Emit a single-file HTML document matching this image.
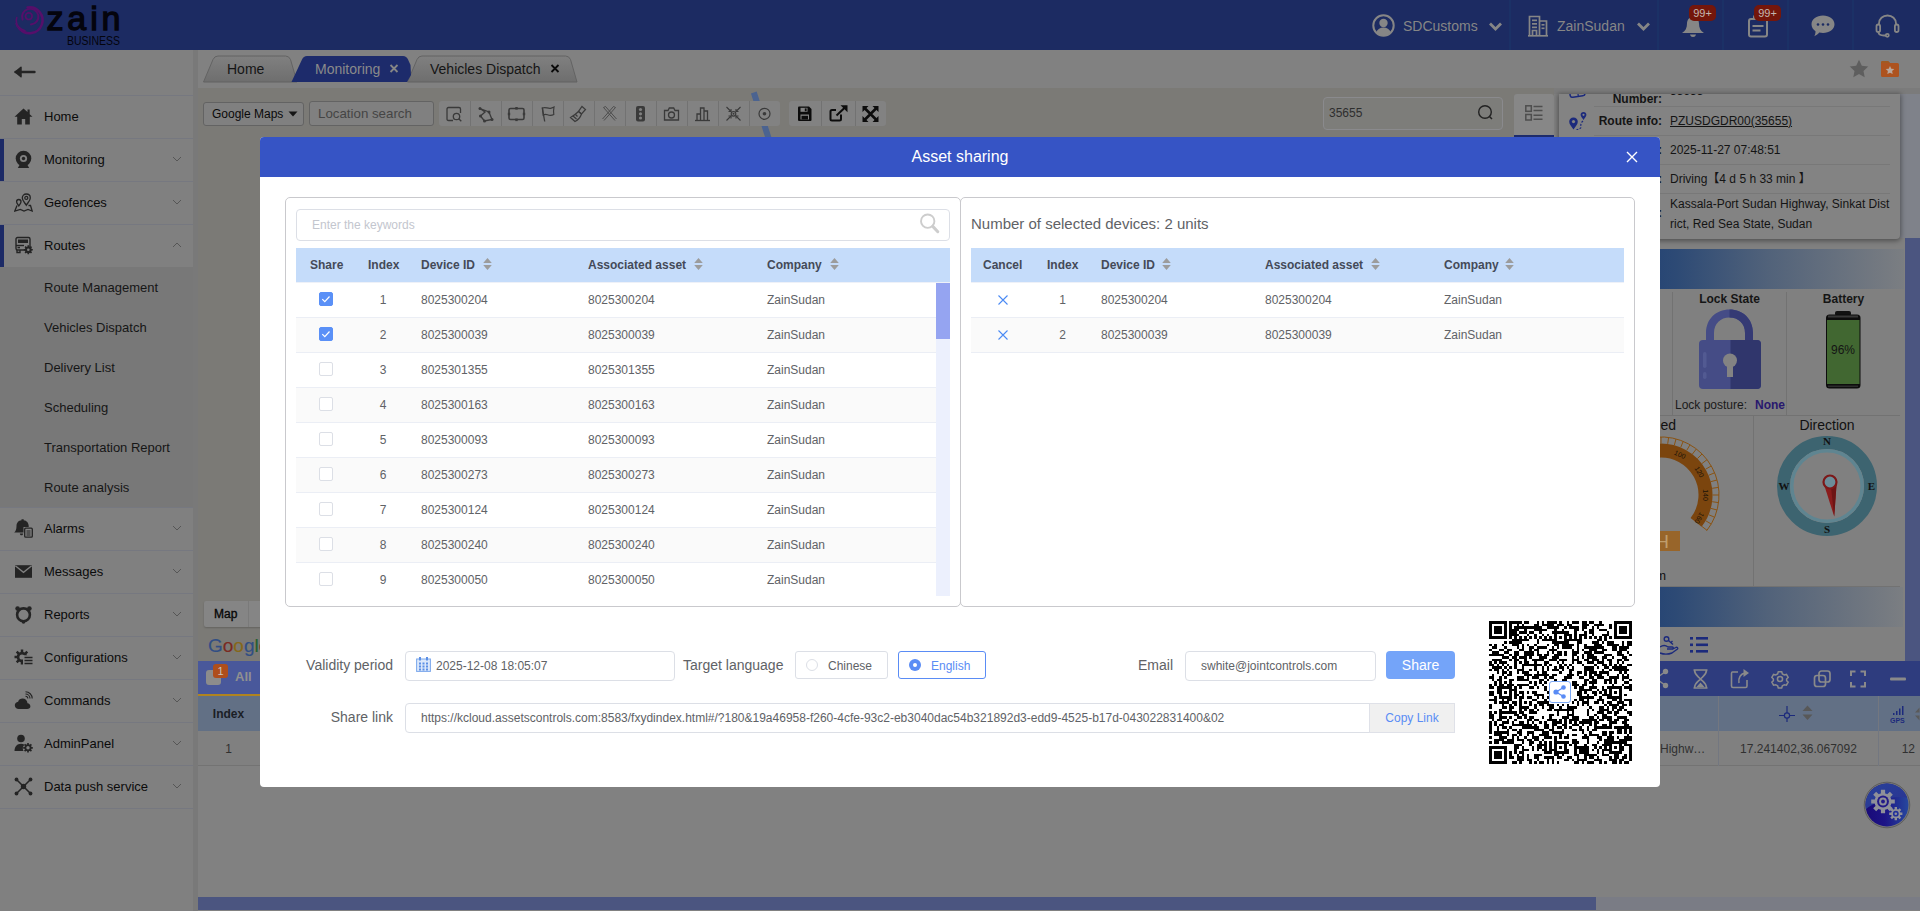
<!DOCTYPE html>
<html lang="en">
<head>
<meta charset="utf-8">
<title>Asset sharing</title>
<style>
*{box-sizing:border-box;margin:0;padding:0}
html,body{width:1920px;height:911px;overflow:hidden;background:#808080;font-family:"Liberation Sans",Arial,sans-serif;font-size:12px;color:#111}
.abs{position:absolute}
#app{position:absolute;left:0;top:0;width:1920px;height:911px;overflow:hidden;background:#808080}
/* ---------- header ---------- */
#hdr{position:absolute;left:0;top:0;width:1920px;height:50px;background:#1c2b62}
#hdr .sep{position:absolute;top:0;width:2px;height:50px;background:#1b3166}
#hdr .t{position:absolute;top:17px;font-size:14px;line-height:18px;color:#868686;white-space:nowrap}
.badge{position:absolute;top:5px;height:16px;width:27px;border-radius:5px;background:#74160b;color:#c4b6b0;font-size:11px;line-height:16px;text-align:center}
/* ---------- sidebar ---------- */
#side{position:absolute;left:0;top:50px;width:193px;height:861px;background:#808080}
#gut{position:absolute;left:193px;top:50px;width:5px;height:861px;background:#797979}
.mi{position:absolute;left:0;width:193px;height:43px;border-top:1px solid #767880}
.mi .tx{position:absolute;left:44px;top:13px;font-size:13px;line-height:16px;color:#0b0b0b;white-space:nowrap}
.mi svg.ic{position:absolute;left:14px;top:11px;width:19px;height:19px}
.mi svg.ch{position:absolute;left:172px;top:16px;width:10px;height:8px}
.mi.act:before{content:"";position:absolute;left:0;top:0;width:4px;height:42px;background:#1c2a66}
#sub{position:absolute;left:0;top:267px;width:193px;height:240px;background:#787878}
#sub div{position:absolute;left:44px;font-size:13px;line-height:16px;color:#161616;white-space:nowrap}
/* ---------- tabs ---------- */
#tabs{position:absolute;left:198px;top:50px;width:1722px;height:38px;background:#818181}
#tabs .lbl{position:absolute;top:11px;font-size:14px;line-height:16px;white-space:nowrap}
/* ---------- map ---------- */
#map{position:absolute;left:198px;top:88px;width:1722px;height:573px;background:#7b7a76}
.tb{position:absolute;border:1px solid #636363;border-radius:3px;background:#808080}
/* ---------- modal ---------- */
#dlg{position:absolute;left:260px;top:137px;width:1400px;height:650px;background:#fff;border-radius:4px;overflow:hidden}
#dlg .hd{position:absolute;left:0;top:0;width:1400px;height:40px;background:#3654c5;color:#fff;font-size:16px;line-height:40px;text-align:center}
.panel{position:absolute;top:60px;width:675px;height:410px;border:1px solid #c9c9cd;border-radius:5px}
.th{position:absolute;height:35px;background:#c5dcfa;border-bottom:1px solid #eef1f8}
.th span,.tr span{position:absolute;white-space:nowrap}
.th span{top:10px;font-weight:bold;font-size:12px;line-height:14px;color:#444a58}
.tr{position:absolute;height:35px;border-bottom:1px solid #ebeef5;background:#fff;color:#606266;font-size:12px}
.tr.g{background:#fafafa}
.tr span{top:10px;line-height:14px}
.so{position:absolute;width:9px;height:14px}
.cb{position:absolute;top:9px;width:14px;height:14px;border:1px solid #dcdfe6;border-radius:2px;background:#fff}
.cb.on{background:#5a90f7;border-color:#5a90f7}
.inp{position:absolute;border:1px solid #dcdfe6;border-radius:4px;background:#fff;color:#606266;font-size:12px;white-space:nowrap;overflow:hidden}
.flb{position:absolute;font-size:14px;line-height:16px;color:#606266;white-space:nowrap;text-align:right}
</style>
</head>
<body>
<div id="app">

<!-- ================= HEADER ================= -->
<div id="hdr">
  <svg class="abs" style="left:0;top:0" width="160" height="50" viewBox="0 0 160 50">
    <g fill="none" stroke="#560f6a" stroke-linecap="round">
      <circle cx="28.800" cy="16.200" r="3.300" stroke-width="1.700"/>
      <path d="M22.600 19.500A8.200 7.800 0 1 1 31 24.400" stroke-width="2"/>
      <path d="M27.500 7.400A13 13 0 1 1 19.500 28.500" stroke-width="2.500"/>
      <path d="M16.800 17.500c-1.800 6 2 11.800 8.200 13.300" stroke-width="1.500"/>
      <path d="M15.800 23.500c1 4.700 5.200 8.300 10.800 8.900" stroke-width="1.200"/>
    </g>
    <text x="46.500" y="30" font-family="Liberation Sans,Arial,sans-serif" font-size="34" fill="#04040d" stroke="#04040d" stroke-width="1.300" textLength="74" lengthAdjust="spacing">zain</text>
    <text x="67" y="44.500" font-family="Liberation Sans,Arial,sans-serif" font-size="12.500" fill="#04040d" textLength="53" lengthAdjust="spacingAndGlyphs">BUSINESS</text>
  </svg>
  <!-- user -->
  <svg class="abs" style="left:1372px;top:14px" width="23" height="23" viewBox="0 0 23 23"><circle cx="11.500" cy="11.500" r="10.200" fill="none" stroke="#868686" stroke-width="2"/><circle cx="11.500" cy="9" r="4.200" fill="#868686"/><path d="M4.200 18.300c1.300-3.300 4-4.800 7.300-4.800s6 1.500 7.300 4.800c-2 2.100-4.500 3.200-7.300 3.200s-5.300-1.100-7.300-3.200z" fill="#868686"/></svg>
  <div class="t" style="left:1403px">SDCustoms</div>
  <svg class="abs" style="left:1488px;top:21px" width="15" height="11" viewBox="0 0 15 11"><path d="M2 2.500l5.500 5.500 5.500-5.500" fill="none" stroke="#868686" stroke-width="2.800"/></svg>
  <div class="sep" style="left:1509px"></div>
  <!-- company -->
  <svg class="abs" style="left:1528px;top:15px" width="20" height="22" viewBox="0 0 20 22"><g fill="none" stroke="#868686" stroke-width="1.700"><path d="M1.500 20.500v-19h10v19"/><path d="M11.500 6h7v14.500"/><path d="M0 20.800h20"/><path d="M4.500 20.500v-5h4v5"/></g><g fill="#868686"><rect x="4" y="4.500" width="5" height="1.700"/><rect x="4" y="8" width="5" height="1.700"/><rect x="4" y="11.500" width="5" height="1.700"/><rect x="13.500" y="9" width="3" height="1.600"/><rect x="13.500" y="12.500" width="3" height="1.600"/></g></svg>
  <div class="t" style="left:1557px">ZainSudan</div>
  <svg class="abs" style="left:1636px;top:21px" width="15" height="11" viewBox="0 0 15 11"><path d="M2 2.500l5.500 5.500 5.500-5.500" fill="none" stroke="#868686" stroke-width="2.800"/></svg>
  <div class="sep" style="left:1657px"></div>
  <!-- bell -->
  <svg class="abs" style="left:1681px;top:16px" width="24" height="22" viewBox="0 0 24 22"><path d="M12 1c-3.600 0-6 2.700-6 6.500 0 4.500-1.500 7.500-5 9.500h22c-3.500-2-5-5-5-9.500 0-3.800-2.400-6.500-6-6.500z" fill="#868686"/><path d="M9 18.500h6c-.4 1.700-1.500 2.500-3 2.500s-2.600-.8-3-2.500z" fill="#868686"/></svg>
  <div class="badge" style="left:1689px">99+</div>
  <div class="sep" style="left:1722px"></div>
  <!-- clipboard -->
  <svg class="abs" style="left:1747px;top:14px" width="22" height="24" viewBox="0 0 22 24"><rect x="2" y="5" width="18" height="17.500" rx="2" fill="none" stroke="#868686" stroke-width="2"/><rect x="6" y="1" width="8" height="5" rx="1.500" fill="#868686"/><rect x="5.500" y="11" width="11" height="2" fill="#868686"/><rect x="5.500" y="15.500" width="8" height="2" fill="#868686"/></svg>
  <div class="badge" style="left:1754px">99+</div>
  <div class="sep" style="left:1787px"></div>
  <!-- chat -->
  <svg class="abs" style="left:1811px;top:15px" width="24" height="23" viewBox="0 0 24 23"><path d="M12 .5c6.400 0 11.500 3.900 11.500 8.800s-5.100 8.800-11.500 8.800c-1.300 0-2.500-.2-3.700-.5-1.500 1.700-3.200 2.900-5.100 3.700.9-1.500 1.300-3.200 1.300-5.100C2 14.600.500 12.100.500 9.300.500 4.400 5.600.5 12 .5z" fill="#868686"/><g fill="#1c2b62"><circle cx="7" cy="9.500" r="1.300"/><circle cx="12" cy="9.500" r="1.300"/><circle cx="17" cy="9.500" r="1.300"/></g></svg>
  <div class="sep" style="left:1852px"></div>
  <!-- headset -->
  <svg class="abs" style="left:1875px;top:14px" width="25" height="24" viewBox="0 0 25 24"><g fill="none" stroke="#868686" stroke-width="1.800"><path d="M4 11v-1.500c0-4.600 3.700-8 8.500-8s8.500 3.400 8.500 8v1.500"/><rect x="1.500" y="10.500" width="3.600" height="7.500" rx="1.800"/><rect x="19.900" y="10.500" width="3.600" height="7.500" rx="1.800"/><path d="M3.500 18c0 2.500 2 3.500 5.500 3.500h2"/><circle cx="12.300" cy="21.300" r="1.500"/></g></svg>
</div>

<!-- ================= SIDEBAR ================= -->
<div id="side"></div>
<div id="gut"></div>
<svg class="abs" style="left:14px;top:65px" width="22" height="14" viewBox="0 0 22 14"><path d="M1.500 7h19" stroke="#242424" stroke-width="2.400" stroke-linecap="round"/><path d="M7 2.300L1.200 7 7 11.700z" fill="#242424" stroke="#242424" stroke-width="1.500" stroke-linejoin="round"/></svg>
<div class="mi" style="top:95px"><svg class="ic" viewBox="0 0 19 19"><path d="M9.500 1.500L.5 9.800h2.700v7.700h4.600v-5.500h3.400v5.500h4.600V9.800h2.700L15.700 7.200V2.500h-2.200v2.600z" fill="#242424"/></svg><div class="tx">Home</div></div>
<div class="mi act" style="top:138px"><svg class="ic" viewBox="0 0 19 19"><circle cx="9.500" cy="8.500" r="7.800" fill="#242424"/><circle cx="9.500" cy="8.500" r="3.600" fill="#808080"/><circle cx="9.500" cy="8.500" r="1.700" fill="#242424"/><path d="M5.500 15l-1.700 3h11.400l-1.700-3z" fill="#242424"/></svg><div class="tx">Monitoring</div><svg class="ch" viewBox="0 0 10 8"><path d="M1 2l4 4 4-4" fill="none" stroke="#565656" stroke-width="1"/></svg></div>
<div class="mi" style="top:181px"><svg class="ic" viewBox="0 0 19 19"><g fill="none" stroke="#242424" stroke-width="1.300"><path d="M12.300 1c2.300 0 4 1.700 4 3.900 0 2.600-2.300 4.600-4 7.300-1.700-2.700-4-4.700-4-7.300 0-2.200 1.700-3.900 4-3.900z"/><circle cx="12.300" cy="4.900" r="1.500"/><path d="M4.800 6.500c1.300 0 2.200 1 2.200 2.200 0 1.500-1.300 2.600-2.200 4.100-.9-1.500-2.200-2.600-2.200-4.100 0-1.200.9-2.200 2.200-2.200z"/><path d="M3 12.500L.8 18l5.500-1.600 3.700 1.600 4-1.600 4.200 1.600-1.700-5.500h-2"/></g></svg><div class="tx">Geofences</div><svg class="ch" viewBox="0 0 10 8"><path d="M1 2l4 4 4-4" fill="none" stroke="#565656" stroke-width="1"/></svg></div>
<div class="mi act" style="top:224px"><svg class="ic" viewBox="0 0 19 19"><g fill="none" stroke="#242424" stroke-width="1.400"><rect x="2" y="1.500" width="14" height="12.500" rx="1.500"/><path d="M2 9.500h8"/><path d="M3 14v2.500h3V14"/></g><rect x="4" y="3.500" width="10" height="3.500" fill="#242424"/><rect x="3.500" y="10.800" width="2.500" height="1.500" fill="#242424"/><circle cx="14.300" cy="13.800" r="3.400" fill="#242424"/><circle cx="14.300" cy="13.800" r="1.300" fill="#808080"/><g stroke="#242424" stroke-width="1.600"><path d="M14.300 9.300v9M9.800 13.800h9M11.100 10.600l6.400 6.400M17.500 10.600l-6.400 6.400"/></g><circle cx="14.300" cy="13.800" r="1.300" fill="#808080"/></svg><div class="tx">Routes</div><svg class="ch" viewBox="0 0 10 8"><path d="M1 6l4-4 4 4" fill="none" stroke="#565656" stroke-width="1"/></svg></div>
<div class="mi" style="top:507px"><svg class="ic" viewBox="0 0 19 19"><path d="M7.500 1.200c-3 .3-5 2.600-5 5.800 0 3.400-.8 5.200-2.300 6.500h9.300V8h5.200v-.9c0-3.300-2-5.600-5-5.900V.3h-2.200z" fill="#242424"/><path d="M5.800 14.500h3.400c-.2 1.300-.9 1.800-1.700 1.800s-1.500-.5-1.700-1.800z" fill="#242424"/><rect x="10.700" y="9.200" width="7.600" height="9" rx="1" fill="none" stroke="#242424" stroke-width="1.300"/><path d="M12.500 12h4M12.500 14h4M12.500 16h4" stroke="#242424" stroke-width="1"/></svg><div class="tx">Alarms</div><svg class="ch" viewBox="0 0 10 8"><path d="M1 2l4 4 4-4" fill="none" stroke="#565656" stroke-width="1"/></svg></div>
<div class="mi" style="top:550px"><svg class="ic" viewBox="0 0 19 19"><path d="M1 3.200h17v12.600H1z" fill="#242424"/><path d="M1.300 3.800l8.200 6.500 8.200-6.500" fill="none" stroke="#808080" stroke-width="1.300"/></svg><div class="tx">Messages</div><svg class="ch" viewBox="0 0 10 8"><path d="M1 2l4 4 4-4" fill="none" stroke="#565656" stroke-width="1"/></svg></div>
<div class="mi" style="top:593px"><svg class="ic" viewBox="0 0 19 19"><circle cx="9.500" cy="9.800" r="6.400" fill="none" stroke="#242424" stroke-width="2.600"/><circle cx="3.600" cy="3.600" r="2.300" fill="#242424"/><circle cx="15.400" cy="3.600" r="2.300" fill="#242424"/><circle cx="9.500" cy="17" r="1.800" fill="#242424"/></svg><div class="tx">Reports</div><svg class="ch" viewBox="0 0 10 8"><path d="M1 2l4 4 4-4" fill="none" stroke="#565656" stroke-width="1"/></svg></div>
<div class="mi" style="top:636px"><svg class="ic" viewBox="0 0 19 19"><g stroke="#242424" stroke-width="2.500"><path d="M8 1.500v15M.5 9h15M2.700 3.700l10.600 10.600M13.300 3.700L2.700 14.300"/></g><circle cx="8" cy="9" r="5.300" fill="#242424"/><circle cx="8" cy="9" r="2.600" fill="#808080"/><rect x="9" y="7.300" width="10" height="11" fill="#808080"/><path d="M10.500 9.500h8M10.500 12.500h8M10.500 15.500h8" stroke="#242424" stroke-width="1.700"/></svg><div class="tx">Configurations</div><svg class="ch" viewBox="0 0 10 8"><path d="M1 2l4 4 4-4" fill="none" stroke="#565656" stroke-width="1"/></svg></div>
<div class="mi" style="top:679px"><svg class="ic" viewBox="0 0 19 19"><path d="M4.800 18c-2.300 0-4-1.600-4-3.700 0-1.900 1.400-3.400 3.300-3.600.7-2 2.300-3.200 4.400-3.200 2.700 0 4.800 2 5 4.700 1.700.2 2.900 1.400 2.900 3 0 1.700-1.400 2.800-3.200 2.800z" fill="#242424"/><g fill="none" stroke="#242424" stroke-width="1.100"><path d="M11.500 5.300c1.300 0 2.300 1 2.300 2.300"/><path d="M11.500 3c2.500 0 4.500 2 4.500 4.500"/><path d="M11.500.8c3.700 0 6.700 3 6.700 6.700"/></g></svg><div class="tx">Commands</div><svg class="ch" viewBox="0 0 10 8"><path d="M1 2l4 4 4-4" fill="none" stroke="#565656" stroke-width="1"/></svg></div>
<div class="mi" style="top:722px"><svg class="ic" viewBox="0 0 19 19"><circle cx="7" cy="4.500" r="3.800" fill="#242424"/><path d="M.5 17c0-4.500 2.700-7.300 6.500-7.300 1.300 0 2.500.4 3.500 1-1.700 1.500-2.300 4-1 6.300z" fill="#242424"/><g stroke="#242424" stroke-width="1.700"><path d="M14 9v9.600M9.200 13.800h9.600M10.600 10.400l6.800 6.800M17.400 10.400l-6.800 6.800"/></g><circle cx="14" cy="13.800" r="3.500" fill="#242424"/><circle cx="14" cy="13.800" r="1.700" fill="#808080"/></svg><div class="tx">AdminPanel</div><svg class="ch" viewBox="0 0 10 8"><path d="M1 2l4 4 4-4" fill="none" stroke="#565656" stroke-width="1"/></svg></div>
<div class="mi" style="top:765px"><svg class="ic" viewBox="0 0 19 19"><g stroke="#242424" stroke-width="1.500" fill="none"><path d="M2.500 2.500l14 14M16.500 2.500l-14 14"/></g><circle cx="9.500" cy="9.500" r="2.700" fill="#242424"/><circle cx="2.500" cy="2.500" r="1.900" fill="#242424"/><circle cx="16.500" cy="2.500" r="1.900" fill="#242424"/><circle cx="2.500" cy="16.500" r="1.900" fill="#242424"/><circle cx="16.500" cy="16.500" r="1.900" fill="#242424"/></svg><div class="tx">Data push service</div><svg class="ch" viewBox="0 0 10 8"><path d="M1 2l4 4 4-4" fill="none" stroke="#565656" stroke-width="1"/></svg></div>
<div class="mi" style="top:808px;height:1px"></div>
<div id="sub"><div style="top:13px">Route Management</div><div style="top:53px">Vehicles Dispatch</div><div style="top:93px">Delivery List</div><div style="top:133px">Scheduling</div><div style="top:173px">Transportation Report</div><div style="top:213px">Route analysis</div></div>

<!-- ================= TABS ================= -->
<div id="tabs">
<svg class="abs" style="left:0;top:0" width="400" height="38" viewBox="0 0 400 38">
<defs><linearGradient id="tg" x1="0" y1="0" x2="0" y2="1"><stop offset="0" stop-color="#808080"/><stop offset="1" stop-color="#6e6e6e"/></linearGradient></defs>
<path d="M209.500 32L219 9.500Q220.500 6 224 6H367.500Q371 6 372.500 9.500L379 32z" fill="url(#tg)" stroke="#636363" stroke-width="1"/>
<path d="M5.500 32L15 9.500Q16.500 6 20 6H87.500Q91 6 92.500 9.500L99 32z" fill="url(#tg)" stroke="#636363" stroke-width="1"/>
<path d="M93.500 32L104 9.500Q105.500 6 109 6H205Q208.500 6 210 9.500L212.500 15 213 25 209 32z" fill="#1d2b6b"/>
<g stroke-width="1.800" fill="none"><path d="M192.500 15l7 7M199.500 15l-7 7" stroke="#868686"/><path d="M353.500 15l7 7M360.500 15l-7 7" stroke="#0a0a0a"/></g>
</svg>
<div class="lbl" style="left:29px;color:#151515">Home</div>
<div class="lbl" style="left:117px;color:#8a8a8a">Monitoring</div>
<div class="lbl" style="left:232px;color:#151515">Vehicles Dispatch</div>
<svg class="abs" style="left:1651px;top:9px" width="20" height="19" viewBox="0 0 20 19"><path d="M10 .8l2.800 5.900 6.400.8-4.700 4.400 1.200 6.300L10 15.100l-5.700 3.100 1.200-6.300L.8 7.500l6.400-.8z" fill="#5e5e5e"/></svg>
<svg class="abs" style="left:1682px;top:9px" width="20" height="19" viewBox="0 0 20 19"><path d="M1 3.500Q1 2 2.500 2H8l2 2h7.500Q19 4 19 5.500V16.500Q19 18 17.500 18H2.500Q1 18 1 16.500z" fill="#ad531f"/><path d="M1 3.500Q1 2 2.500 2H8l2 2H1z" fill="#a05a22"/><path d="M10 7l1.300 2.700 3 .4-2.200 2 .6 3L10 13.700l-2.700 1.400.6-3-2.200-2 3-.4z" fill="#b9a79c"/></svg>
</div>

<!-- ================= MAP AREA ================= -->
<div id="map"></div>
<svg class="abs" style="left:740px;top:88px" width="40" height="50" viewBox="0 0 40 50"><path d="M13.800 4.500L28.500 50" stroke="#4b6390" stroke-width="6"/></svg>
<div class="tb" style="left:203px;top:102px;width:101px;height:24px"></div><div class="abs" style="left:212px;top:107px;font-size:12px;line-height:14px;color:#0a0a0a;white-space:nowrap">Google Maps</div><svg class="abs" style="left:288px;top:111px" width="10" height="6" viewBox="0 0 10 6"><path d="M.5.500h9l-4.500 5z" fill="#151515"/></svg>
<div class="tb" style="left:309px;top:101px;width:125px;height:25px"></div><div class="abs" style="left:318px;top:106px;font-size:13.300px;line-height:15px;color:#454545;white-space:nowrap">Location search</div>
<div class="abs" style="left:439px;top:101px;width:341px;height:25px;background:#828282;border-radius:3px"></div>
<svg class="abs" style="left:439px;top:101px" width="31" height="25" viewBox="0 0 31 25"><g fill="none" stroke="#3a3a3a" stroke-width="1.300"><path d="M14 19.500H9.500Q8 19.500 8 18V8Q8 6.500 9.500 6.500H20Q21.500 6.500 21.500 8V12"/><circle cx="17.500" cy="15.500" r="3.200"/><path d="M19.800 17.800l2.500 2.500"/></g></svg>
<svg class="abs" style="left:470px;top:101px" width="31" height="25" viewBox="0 0 31 25"><g fill="none" stroke="#3a3a3a" stroke-width="1.300"><path d="M10 7.500l9 3.500 3 7.500-7.500 1.500-4-5 4.500-4z"/></g><g fill="#3a3a3a"><circle cx="10" cy="7.500" r="1.500"/><circle cx="19" cy="11" r="1.500"/><circle cx="22" cy="18.500" r="1.500"/><circle cx="14.500" cy="20" r="1.500"/><circle cx="10.500" cy="15" r="1.500"/></g></svg>
<div class="abs" style="left:470px;top:101px;width:1px;height:25px;background:#727272"></div>
<svg class="abs" style="left:501px;top:101px" width="31" height="25" viewBox="0 0 31 25"><rect x="8" y="7.500" width="15" height="11" rx="1.500" fill="none" stroke="#3a3a3a" stroke-width="1.600"/><g fill="#3a3a3a"><rect x="14.300" y="6" width="2.400" height="2.600"/><rect x="14.300" y="17.500" width="2.400" height="2.600"/><rect x="6.800" y="11.800" width="2.400" height="2.400"/><rect x="21.800" y="11.800" width="2.400" height="2.400"/></g></svg>
<div class="abs" style="left:501px;top:101px;width:1px;height:25px;background:#727272"></div>
<svg class="abs" style="left:532px;top:101px" width="31" height="25" viewBox="0 0 31 25"><path d="M10.500 7c3-1.500 5 .8 8 .3 1.300-.2 2.500-.8 3.500-1.300-.5 2.500-.6 5-.2 7.500-2.300 1.200-4.300 1-6.300.3-1.700-.6-3.200-.4-4.300.2z" fill="none" stroke="#3a3a3a" stroke-width="1.200"/><path d="M10.200 6.500l2.500 14" stroke="#3a3a3a" stroke-width="1.300"/></svg>
<div class="abs" style="left:532px;top:101px;width:1px;height:25px;background:#727272"></div>
<svg class="abs" style="left:563px;top:101px" width="31" height="25" viewBox="0 0 31 25"><g fill="none" stroke="#3a3a3a" stroke-width="1.200"><path d="M19 5.500l3.500 3-4 4.500-3-2.500z"/><path d="M15.500 10.500l3 2.500c-1 3-3.500 6-6.500 7.500l-4.500-4c2.500-1.500 5.500-3.500 8-6z"/><path d="M10 15l3.500 3M12.500 13.500l2 2"/></g></svg>
<div class="abs" style="left:563px;top:101px;width:1px;height:25px;background:#727272"></div>
<svg class="abs" style="left:594px;top:101px" width="31" height="25" viewBox="0 0 31 25"><g fill="none" stroke="#474747" stroke-width=".9"><path d="M9.500 6.500l11.500 13M11.500 5.500l11 12.500M21.500 6.500l-11.500 13M19.500 5.500l-11 12.500M9.500 6.500l2-1M21.500 6.500l-2-1"/></g></svg>
<div class="abs" style="left:594px;top:101px;width:1px;height:25px;background:#727272"></div>
<svg class="abs" style="left:625px;top:101px" width="31" height="25" viewBox="0 0 31 25"><rect x="11" y="5" width="9" height="15.500" rx="2" fill="#3a3a3a"/><g fill="#808080"><circle cx="15.500" cy="8.500" r="1.600"/><circle cx="15.500" cy="12.800" r="1.600"/><circle cx="15.500" cy="17" r="1.600"/></g></svg>
<div class="abs" style="left:625px;top:101px;width:1px;height:25px;background:#727272"></div>
<svg class="abs" style="left:656px;top:101px" width="31" height="25" viewBox="0 0 31 25"><g fill="none" stroke="#3a3a3a" stroke-width="1.300"><path d="M8.500 9.500h3.500l1.300-2.500h4.400l1.300 2.500h3.500v9.500h-14z"/><circle cx="15.500" cy="14" r="3"/></g></svg>
<div class="abs" style="left:656px;top:101px;width:1px;height:25px;background:#727272"></div>
<svg class="abs" style="left:687px;top:101px" width="31" height="25" viewBox="0 0 31 25"><g fill="none" stroke="#3a3a3a" stroke-width="1.300"><path d="M8 19.500h15"/><path d="M10 19v-6h3.500v6M13.500 19V7h3.500v12M17 19v-9h3.500v9"/></g></svg>
<div class="abs" style="left:687px;top:101px;width:1px;height:25px;background:#727272"></div>
<svg class="abs" style="left:718px;top:101px" width="31" height="25" viewBox="0 0 31 25"><g fill="none" stroke="#3a3a3a" stroke-width="1.100"><path d="M8.500 6l4.500 4.500M22.500 6L18 10.500M8.500 19.500l4.500-4.500M22.500 19.500L18 15"/><path d="M13 8v2.500h-2.500M18 8v2.500h2.500M13 17.500V15h-2.500M18 17.500V15h2.500"/><circle cx="15.500" cy="12.800" r="2.300"/></g><circle cx="15.500" cy="12.800" r="1" fill="#3a3a3a"/></svg>
<div class="abs" style="left:718px;top:101px;width:1px;height:25px;background:#727272"></div>
<svg class="abs" style="left:749px;top:101px" width="31" height="25" viewBox="0 0 31 25"><circle cx="15.500" cy="12.800" r="5.500" fill="none" stroke="#3a3a3a" stroke-width="1.200"/><circle cx="15.500" cy="12.800" r="1.800" fill="#3a3a3a"/></svg>
<div class="abs" style="left:749px;top:101px;width:1px;height:25px;background:#727272"></div>
<div class="abs" style="left:789px;top:101px;width:97px;height:25px;background:#828282;border-radius:3px"></div>
<svg class="abs" style="left:789px;top:101px" width="97" height="25" viewBox="0 0 97 25"><path d="M32.500 0v25M66.500 0v25" stroke="#727272" stroke-width="1"/><path d="M9 6.500Q9 5.500 10 5.500H20l2.500 2.500V19Q22.500 20 21.500 20H10Q9 20 9 19z" fill="#0c0c0c"/><rect x="11.500" y="6.800" width="7" height="4" fill="#828282"/><rect x="15.800" y="7.400" width="1.800" height="2.800" fill="#0c0c0c"/><rect x="11.500" y="13.500" width="8.500" height="5" fill="#828282"/><rect x="12.500" y="14.800" width="6.500" height="3.700" fill="#0c0c0c"/><g fill="none" stroke="#0c0c0c" stroke-width="2"><path d="M52 13.500V18Q52 19.500 50.500 19.500H43Q41.500 19.500 41.500 18V10.500Q41.500 9 43 9H47"/><path d="M47.500 14.500L57 5.500"/></g><path d="M51.500 4.300h7v7z" fill="#0c0c0c"/><g stroke="#0c0c0c" stroke-width="2.600"><path d="M76 7.500l11 11M87 7.500l-11 11"/></g><g fill="#0c0c0c"><path d="M73.500 5h6l-6 6zM89.500 5v6l-6-6zM73.500 21v-6l6 6zM89.500 21h-6l6-6z"/></g></svg>
<div class="tb" style="left:1323px;top:97px;width:180px;height:33px;border-radius:4px;border-color:#8a8a8d;background:#7d7d7a"></div><div class="abs" style="left:1329px;top:106px;font-size:12px;line-height:14px;color:#2e2e2e">35655</div><svg class="abs" style="left:1477px;top:104px" width="18" height="18" viewBox="0 0 18 18"><circle cx="8" cy="8" r="6.300" fill="none" stroke="#222" stroke-width="1.400"/><path d="M12.500 12.500l2.500 2.500" stroke="#222" stroke-width="1.500"/></svg>
<div class="abs" style="left:1514px;top:94px;width:40px;height:43px;background:#878787;border-radius:3px 3px 0 0;border-bottom:2px solid #1d2b6b"></div><svg class="abs" style="left:1524px;top:103px" width="20" height="20" viewBox="0 0 20 20"><g fill="none" stroke="#4e4e4e" stroke-width="1.500"><rect x="1.800" y="2.800" width="5.500" height="5.500"/><rect x="1.800" y="11.500" width="5.500" height="5.500"/><path d="M9.500 3.500h9M9.500 7.500h9M9.500 12.300h9M9.500 16.300h9"/></g></svg>
<div class="abs" style="left:1554px;top:88px;width:366px;height:573px;background:#808080"></div>
<div class="abs" style="left:1554px;top:88px;width:366px;height:6px;background:#7b7b7b"></div>
<div class="abs" style="left:1900px;top:94px;width:20px;height:144px;background:#7f828a"></div>
<div class="abs" style="left:1905px;top:238px;width:15px;height:423px;background:#4b5580"></div>
<div class="abs" style="left:1600px;top:249px;width:304px;height:40px;background:linear-gradient(90deg,#173a72 0,#2d4a75 25%,#51627a 55%,#7b7e82 100%)"></div>
<div class="abs" style="left:1600px;top:587px;width:303px;height:40px;background:linear-gradient(90deg,#173a72 0,#2d4a75 25%,#51627a 55%,#7b7e82 100%)"></div>
<div class="abs" style="left:1559px;top:94px;width:341px;height:145px;background:#838383;border-radius:0 0 4px 4px;box-shadow:0 1px 5px 1px rgba(0,0,0,.38);overflow:hidden;font-size:12px;color:#141414">
<div class="abs" style="left:35px;top:12px;width:296px;height:1px;background:#787878"></div>
<div class="abs" style="left:35px;top:41px;width:296px;height:1px;background:#787878"></div>
<div class="abs" style="left:35px;top:70px;width:296px;height:1px;background:#787878"></div>
<div class="abs" style="left:35px;top:99px;width:296px;height:1px;background:#787878"></div>
<div class="abs" style="left:0;top:-3px;width:103px;text-align:right;font-weight:bold;line-height:16px;font-size:12px">Number:</div>
<div class="abs" style="left:111px;top:-11px;line-height:16px">35655</div>
<div class="abs" style="left:0;top:19px;width:103px;text-align:right;font-weight:bold;line-height:16px;font-size:12px">Route info:</div>
<div class="abs" style="left:111px;top:19px;line-height:16px;text-decoration:underline;font-size:12px">PZUSDGDR00(35655)</div>
<div class="abs" style="left:0;top:48px;width:103px;text-align:right;font-weight:bold;line-height:16px;font-size:12px">Time:</div>
<div class="abs" style="left:111px;top:48px;line-height:16px;font-size:12px">2025-11-27 07:48:51</div>
<div class="abs" style="left:0;top:77px;width:103px;text-align:right;font-weight:bold;line-height:16px;font-size:12px">State:</div>
<div class="abs" style="left:111px;top:77px;line-height:16px;font-size:12px;white-space:nowrap">Driving<span style="font-family:'Liberation Sans','Noto Sans CJK SC',sans-serif">【</span>4 d 5 h 33 min <span style="font-family:'Liberation Sans','Noto Sans CJK SC',sans-serif">】</span></div>
<div class="abs" style="left:0;top:111px;width:103px;text-align:right;font-weight:bold;line-height:16px;font-size:12px">Address:</div>
<div class="abs" style="left:111px;top:100px;white-space:nowrap;line-height:20px;font-size:12px">Kassala-Port Sudan Highway, Sinkat Dist<br>rict, Red Sea State, Sudan</div>
<svg class="abs" style="left:9px;top:17px" width="20" height="20" viewBox="0 0 20 20"><path d="M5.500 6.500c2.500 0 4.300 1.800 4.300 4.200 0 2.800-2.500 4.800-4.300 7.800-1.800-3-4.300-5-4.300-7.800 0-2.400 1.800-4.200 4.300-4.200z" fill="#1c2a7c"/><circle cx="5.500" cy="10.600" r="1.600" fill="#838383"/><path d="M15.500 1c1.700 0 2.900 1.200 2.900 2.800 0 1.900-1.700 3.300-2.900 5.200-1.200-1.900-2.900-3.300-2.900-5.200 0-1.600 1.200-2.800 2.900-2.800z" fill="#1c2a7c"/><circle cx="15.500" cy="3.800" r="1.100" fill="#838383"/><path d="M15 10c-2 1.500-2.500 3.500-2 5.500.3 1.500-1.500 3-4.500 3" fill="none" stroke="#1c2a7c" stroke-width="1.200" stroke-dasharray="2 1.500"/></svg>
<svg class="abs" style="left:10px;top:-8px" width="20" height="12" viewBox="0 0 20 12"><g transform="rotate(-8 9 8)"><rect x="1" y="5.500" width="15" height="5" rx="2.500" fill="none" stroke="#1c2a7c" stroke-width="1.500"/><path d="M9 5.500v5" stroke="#1c2a7c" stroke-width="1.200"/><path d="M9 5.500c2.500-3 6.500-3 8.500 1" fill="none" stroke="#1c2a7c" stroke-width="1.500"/></g></svg>
</div>
<div class="abs" style="left:1672px;top:292px;width:1px;height:124px;background:#727272"></div>
<div class="abs" style="left:1786px;top:292px;width:1px;height:124px;background:#727272"></div>
<div class="abs" style="left:1600px;top:415px;width:300px;height:1px;background:#727272"></div>
<div class="abs" style="left:1673px;top:291px;width:113px;text-align:center;font-weight:bold;font-size:12px;line-height:16px;color:#151515">Lock State</div>
<div class="abs" style="left:1787px;top:291px;width:113px;text-align:center;font-weight:bold;font-size:12px;line-height:16px;color:#151515">Battery</div>
<svg class="abs" style="left:1698px;top:308px" width="64" height="82" viewBox="0 0 64 82">
<path d="M8 36V25C8 11 18 1.500 31.500 1.500S55 11 55 25V36H47V25C47 15.500 40.500 9.500 31.500 9.500S16 15.500 16 25V36z" fill="#454c86"/>
<path d="M31.500 1.500C45 1.500 55 11 55 25V36H47V25C47 15.500 40.500 9.500 31.500 9.500z" fill="#353a74"/>
<rect x="1" y="32" width="62" height="49" rx="4" fill="#454c86"/>
<path d="M32.500 32H59Q63 32 63 36V77Q63 81 59 81H32.500z" fill="#30366c"/>
<circle cx="32" cy="52.500" r="7" fill="#838383"/><rect x="29" y="55" width="6" height="14" fill="#838383"/>
<rect x="5" y="44" width="3.500" height="16" rx="1.700" fill="#525a92"/><rect x="5" y="64" width="3.500" height="7" rx="1.700" fill="#525a92"/>
</svg>
<svg class="abs" style="left:1825px;top:310px" width="37" height="80" viewBox="0 0 37 80">
<rect x="10" y="1" width="16" height="5" rx="2" fill="#111"/>
<rect x="1" y="4.500" width="34.500" height="74" rx="3.500" fill="#0d0d0d"/>
<rect x="2" y="10" width="32.500" height="64" fill="#416731"/>
<rect x="3" y="5.500" width="30" height="2" fill="#4a4a4a" opacity=".7"/>
<rect x="3" y="75.500" width="30" height="1.500" fill="#3a3a3a" opacity=".7"/>
</svg>
<div class="abs" style="left:1825px;top:343px;width:36px;text-align:center;font-size:12px;line-height:14px;color:#141414">96%</div>
<div class="abs" style="left:1675px;top:398px;font-size:12px;line-height:14px;color:#1a1a1a;white-space:nowrap">Lock posture:</div>
<div class="abs" style="left:1755px;top:398px;font-size:12px;line-height:14px;color:#28186e;font-weight:bold;white-space:nowrap">None</div>

<div class="abs" style="left:1753px;top:416px;width:1px;height:171px;background:#727272"></div>
<div class="abs" style="left:1600px;top:586px;width:300px;height:1px;background:#727272"></div>
<div class="abs" style="left:1754px;top:417px;width:146px;text-align:center;font-size:14px;line-height:17px;color:#111">Direction</div>
<div class="abs" style="left:1600px;top:417px;width:76px;text-align:right;font-size:14px;line-height:17px;color:#111">Speed</div>
<div class="abs" style="left:1600px;top:568px;width:66px;text-align:right;font-size:13px;line-height:15px;color:#111">0km</div>
<svg class="abs" style="left:1774px;top:433px" width="106" height="106" viewBox="0 0 106 106">
<circle cx="53" cy="53" r="43.500" fill="none" stroke="#3d6470" stroke-width="13"/>
<circle cx="53" cy="53" r="35.200" fill="none" stroke="#5f8591" stroke-width="3.400"/>
<path d="M50.500 53L60.200 83.500 62.500 52z" fill="#8a1c1c"/><path d="M57 54L60.200 83.500 62.500 52z" fill="#6d1414"/>
<circle cx="56" cy="49" r="6.500" fill="#6c8d99" stroke="#7c1818" stroke-width="2.200"/>
<g font-family="Liberation Serif,serif" font-weight="bold" font-size="11" fill="#111" text-anchor="middle"><text x="53" y="11.500">N</text><text x="53" y="100">S</text><text x="10" y="57">W</text><text x="97.500" y="57">E</text></g>
</svg>
<svg class="abs" style="left:1600px;top:430px" width="125" height="130" viewBox="0 0 125 130">
<g transform="translate(61,65)">
<path d="M-3.9 -44.3A44.5 44.5 0 0 1 35.1 27.4" fill="none" stroke="#7b450e" stroke-width="14"/>
<path d="M-5.1 -57.8A58 58 0 0 1 45.7 35.7" fill="none" stroke="#8a5312" stroke-width="1"/>
<path d="M-6.7 -51.1L-7.6 -57.5M0.0 -51.5L0.0 -58.0M6.7 -51.1L7.6 -57.5M13.3 -49.7L15.0 -56.0M19.7 -47.6L22.2 -53.6M25.7 -44.6L29.0 -50.2M31.4 -40.9L35.3 -46.0M36.4 -36.4L41.0 -41.0M40.9 -31.4L46.0 -35.3M44.6 -25.8L50.2 -29.0M47.6 -19.7L53.6 -22.2M49.7 -13.3L56.0 -15.0M51.1 -6.7L57.5 -7.6M51.5 -0.0L58.0 -0.0M51.1 6.7L57.5 7.6M49.7 13.3L56.0 15.0M47.6 19.7L53.6 22.2M44.6 25.7L50.2 29.0M40.9 31.4L46.0 35.3" stroke="#8a5312" stroke-width="1" fill="none"/>
<g font-family="Liberation Sans,sans-serif" font-size="7" fill="#1a1208" text-anchor="middle"><text transform="translate(17.9,-38.3) rotate(25)">100</text><text transform="translate(36.3,-21.8) rotate(59)">120</text><text transform="translate(42.3,-0.0) rotate(90)">140</text><text transform="translate(36.3,21.8) rotate(121)">160</text></g>
</g>
</svg>
<div class="abs" style="left:1640px;top:531px;width:40px;height:20px;background:#98652a"></div>
<div class="abs" style="left:1590px;top:531px;width:79px;height:20px;font-size:19px;line-height:21px;color:#bf9d6c;text-align:right;white-space:nowrap">KM/H</div>

<svg class="abs" style="left:1655px;top:634px" width="56" height="22" viewBox="0 0 56 22">
<g fill="none" stroke="#1c2a7c" stroke-width="1.400"><circle cx="11.500" cy="5" r="2.300"/><path d="M13.500 6.500l4.500 4M16 8.500l1.500-1.500"/><path d="M5 13c3-2 6-1.500 8 0h4.500c1 0 1 2 0 2H12M5 19c4 1.500 8 1.500 12 0l5.500-4c.8-1-.5-2.300-1.800-1.500L17 15.500"/></g>
<g fill="#1c2a7c"><rect x="35" y="3" width="3" height="2.600"/><rect x="35" y="9.500" width="3" height="2.600"/><rect x="35" y="16" width="3" height="2.600"/><rect x="41" y="3" width="12" height="2.600"/><rect x="41" y="9.500" width="12" height="2.600"/><rect x="41" y="16" width="12" height="2.600"/></g></svg>
<div class="abs" style="left:198px;top:661px;width:1722px;height:250px;background:#818181"></div>
<div class="abs" style="left:198px;top:661px;width:1722px;height:35px;background:#2e3c7e"></div>
<div class="abs" style="left:198px;top:661px;width:70px;height:35px;background:#49589b;border-bottom:2px solid #b08420"></div>
<div class="abs" style="left:206px;top:670px;width:15px;height:15px;border-radius:3px;background:#8c8c8c"></div>
<div class="abs" style="left:213px;top:664px;width:15px;height:14px;border-radius:3px;background:#ae4e1c;color:#c9c2bd;font-size:11px;line-height:14px;text-align:center">1</div>
<div class="abs" style="left:235px;top:669px;font-size:13px;line-height:16px;font-weight:bold;color:#909090">All</div>
<div class="abs" style="left:198px;top:696px;width:1722px;height:35px;background:#627085"></div>
<div class="abs" style="left:198px;top:731px;width:1722px;height:35px;background:#808080;border-bottom:1px solid #737373"></div>
<div class="abs" style="left:198px;top:707px;width:61px;text-align:center;font-size:12px;line-height:14px;font-weight:bold;color:#1b1e26">Index</div>
<div class="abs" style="left:198px;top:742px;width:61px;text-align:center;font-size:12px;line-height:14px;color:#303030">1</div>
<div class="abs" style="left:1718px;top:696px;width:1px;height:70px;background:#737780"></div><div class="abs" style="left:1878px;top:696px;width:1px;height:70px;background:#737780"></div>
<div class="abs" style="left:1660px;top:742px;font-size:12px;line-height:14px;color:#303030;white-space:nowrap">Highw…</div>
<div class="abs" style="left:1719px;top:742px;width:159px;text-align:center;font-size:12px;line-height:14px;color:#303030;white-space:nowrap">17.241402,36.067092</div>
<div class="abs" style="left:1879px;top:742px;width:41px;text-align:right;padding-right:5px;font-size:12px;line-height:14px;color:#303030">12</div>
<svg class="abs" style="left:1776px;top:703px" width="42" height="22" viewBox="0 0 42 22"><g fill="none" stroke="#1c2a7c" stroke-width="1.200"><path d="M11 3v16M3 12.500h16"/><circle cx="11" cy="12.500" r="2.600" fill="#627085"/></g><path d="M31.500 2.500l5 5.500h-10zM31.500 17l-5-5.500h10z" fill="#585858"/></svg>
<svg class="abs" style="left:1888px;top:704px" width="32" height="22" viewBox="0 0 32 22"><g fill="#1c2a7c"><rect x="5" y="9" width="1.500" height="2"/><rect x="8" y="7" width="1.500" height="4"/><rect x="11" y="4.500" width="1.500" height="6.500"/><rect x="14" y="2" width="1.500" height="9"/></g><text x="2" y="19" font-family="Liberation Sans,sans-serif" font-size="7" font-weight="bold" fill="#1c2a7c">GPS</text><path d="M31.500 3.500v5h-4.500zM31.500 16.500v-5h-4.500z" fill="#5a5a5a"/></svg>
<svg class="abs" style="left:1655px;top:665px" width="260" height="28" viewBox="0 0 260 28">
<g fill="#8a8a8a"><circle cx="10.500" cy="6.500" r="2.700"/><circle cx="10.500" cy="20.500" r="2.700"/><circle cx="1" cy="13.500" r="2.700"/></g><path d="M10.500 6.500L1 13.500l9.500 7" fill="none" stroke="#8a8a8a" stroke-width="1.500"/>
<g fill="none" stroke="#8a8a8a" stroke-width="1.600"><path d="M38.500 5h14M38.500 23h14M39.500 5c0 5 4 6.500 6 9-2 2.500-6 4-6 9M51.500 5c0 5-4 6.500-6 9 2 2.500 6 4 6 9"/></g><path d="M41.500 22l4-4.500 4 4.500z" fill="#8a8a8a"/>
<g fill="none" stroke="#8a8a8a" stroke-width="1.600"><path d="M83 7h-5.500Q76.500 7 76.500 8.500V21Q76.500 22.500 78 22.500H90.500Q92 22.500 92 21V15"/><path d="M84 18c-1-5 1.500-9.500 6.500-10"/></g><path d="M88.500 4l5.500 4-5.500 4z" fill="#8a8a8a"/>
<g fill="none" stroke="#8a8a8a" stroke-width="1.800" transform="translate(125 14) scale(.85) translate(-125 -14)"><circle cx="125" cy="14" r="3"/><path d="M123 5.500h4l.8 2.500 2.300 1.300 2.500-.6 2 3.500-1.800 1.800v2l1.800 1.800-2 3.500-2.500-.6-2.300 1.300-.8 2.500h-4l-.8-2.500-2.300-1.300-2.500.6-2-3.500 1.800-1.800v-2l-1.800-1.800 2-3.500 2.500.6 2.300-1.300z"/></g>
<g fill="none" stroke="#8a8a8a" stroke-width="1.700"><rect x="164" y="6" width="11" height="11" rx="2.500"/><rect x="159.500" y="10.500" width="11" height="11" rx="2.500"/></g>
<g fill="none" stroke="#8a8a8a" stroke-width="2"><path d="M196 11V6.500h4.500M205.500 6.500H210V11M210 17v4.500h-4.500M200.500 21.500H196V17"/></g>
<rect x="235" y="12.500" width="16" height="3" rx="1" fill="#8a8a8a"/>
</svg>
<div class="abs" style="left:198px;top:897px;width:1722px;height:13px;background:#7a7c85"></div><div class="abs" style="left:198px;top:897px;width:1398px;height:13px;background:#4b5580"></div>
<div class="abs" style="left:204px;top:601px;width:70px;height:26px;background:#858585;border-radius:2px;box-shadow:0 1px 2px rgba(0,0,0,.2)"></div><div class="abs" style="left:248px;top:601px;width:1px;height:26px;background:#7a7a7a"></div><div class="abs" style="left:214px;top:607px;font-size:12px;-webkit-text-stroke:.35px #080808;line-height:14px;color:#080808">Map</div>
<div class="abs" style="left:208px;top:634px;font-size:19px;line-height:24px;white-space:nowrap;letter-spacing:0;-webkit-text-stroke:.15px"><span style="color:#314e84">G</span><span style="color:#7a2a22">o</span><span style="color:#86681a">o</span><span style="color:#314e84">g</span><span style="color:#25602f">l</span><span style="color:#7a2a22">e</span></div>
<svg class="abs" style="left:1862px;top:780px" width="50" height="50" viewBox="0 0 50 50"><defs>
<linearGradient id="gb1" x1="0" y1="0" x2="1" y2="0"><stop offset="0" stop-color="#190a78"/><stop offset=".45" stop-color="#1d1486"/><stop offset="1" stop-color="#27489e"/></linearGradient>
<linearGradient id="gb2" x1="0" y1="0" x2="1" y2="1"><stop offset="0" stop-color="#28439c"/><stop offset="1" stop-color="#2a318e"/></linearGradient>
<clipPath id="gbc"><circle cx="25" cy="25" r="21.500"/></clipPath></defs>
<circle cx="25" cy="25" r="22.800" fill="#777" stroke="#5e5e5e" stroke-width="1"/>
<circle cx="25" cy="25" r="21.500" fill="url(#gb1)"/>
<path d="M0 33C10 22 32 13 50 19V0H0z" fill="url(#gb2)" clip-path="url(#gbc)"/>
<path d="M26.16 21.50L32.80 21.50M24.65 25.15L29.34 29.84M21.00 26.66L21.00 33.30M17.35 25.15L12.66 29.84M15.84 21.50L9.20 21.50M17.35 17.85L12.66 13.16M21.00 16.34L21.00 9.70M24.65 17.85L29.34 13.16" stroke="#8f9099" stroke-width="4.2" stroke-linecap="butt" fill="none"/><circle cx="21" cy="21.5" r="8.6" fill="#8f9099"/><circle cx="21" cy="21.500" r="5.900" fill="#231a88"/><circle cx="21" cy="21.500" r="3.900" fill="#8f9099"/><circle cx="21" cy="21.500" r="1.900" fill="#231a88"/>
<path d="M36.62 33.70L40.40 33.70M35.79 35.69L38.47 38.37M33.80 36.52L33.80 40.30M31.81 35.69L29.13 38.37M30.98 33.70L27.20 33.70M31.81 31.71L29.13 29.03M33.80 30.88L33.80 27.10M35.79 31.71L38.47 29.03" stroke="#8f9099" stroke-width="2.4" stroke-linecap="butt" fill="none"/><circle cx="33.8" cy="33.7" r="4.7" fill="#8f9099"/><circle cx="33.800" cy="33.700" r="2.900" fill="#22309a"/><circle cx="33.800" cy="33.700" r="1.300" fill="#8f9099"/>
</svg>

<!-- ================= MODAL ================= -->
<div id="dlg">
  <div class="hd">Asset sharing</div>
<svg class="abs" style="left:1366px;top:14px" width="12" height="12" viewBox="0 0 12 12"><path d="M1 1l10 10M11 1L1 11" stroke="#fff" stroke-width="1.400" fill="none"/></svg>
<div class="panel" style="left:25px;width:676px"></div>
<div class="inp" style="left:36px;top:72px;width:654px;height:32px"></div>
<div class="abs" style="left:52px;top:80px;font-size:12px;line-height:16px;color:#c3c6ce;white-space:nowrap">Enter the keywords</div>
<svg class="abs" style="left:659px;top:74px" width="22" height="24" viewBox="0 0 24 26"><circle cx="9.500" cy="11" r="7.300" fill="none" stroke="#cdcdcd" stroke-width="2.100"/><path d="M15 16.700l5.500 5.800" stroke="#cdcdcd" stroke-width="3.300" stroke-linecap="round"/></svg>
<div class="th" style="left:36px;top:111px;width:654px"><span style="left:14px">Share</span><span style="left:72px">Index</span><span style="left:125px">Device ID</span><svg class="so" style="left:187px;top:9px" viewBox="0 0 9 14"><path d="M4.500 1L8.800 6H.2zM4.500 13L.2 8h8.600z" fill="#9c9c9c"/></svg><span style="left:292px">Associated asset</span><svg class="so" style="left:398px;top:9px" viewBox="0 0 9 14"><path d="M4.500 1L8.800 6H.2zM4.500 13L.2 8h8.600z" fill="#9c9c9c"/></svg><span style="left:471px">Company</span><svg class="so" style="left:534px;top:9px" viewBox="0 0 9 14"><path d="M4.500 1L8.800 6H.2zM4.500 13L.2 8h8.600z" fill="#9c9c9c"/></svg></div>
<div class="abs" style="left:36px;top:146px;width:654px;height:314px;overflow:hidden">
<div class="tr" style="left:0;top:0px;width:640px"><div class="cb on" style="left:23px"><svg width="12" height="12" viewBox="0 0 12 12" style="position:absolute;left:0;top:0"><path d="M2.300 6.200l2.500 2.500 4.700-5.200" fill="none" stroke="#fff" stroke-width="1.200"/></svg></div><span style="left:72px;width:30px;text-align:center">1</span><span style="left:125px">8025300204</span><span style="left:292px">8025300204</span><span style="left:471px">ZainSudan</span></div>
<div class="tr g" style="left:0;top:35px;width:640px"><div class="cb on" style="left:23px"><svg width="12" height="12" viewBox="0 0 12 12" style="position:absolute;left:0;top:0"><path d="M2.300 6.200l2.500 2.500 4.700-5.200" fill="none" stroke="#fff" stroke-width="1.200"/></svg></div><span style="left:72px;width:30px;text-align:center">2</span><span style="left:125px">8025300039</span><span style="left:292px">8025300039</span><span style="left:471px">ZainSudan</span></div>
<div class="tr" style="left:0;top:70px;width:640px"><div class="cb" style="left:23px"></div><span style="left:72px;width:30px;text-align:center">3</span><span style="left:125px">8025301355</span><span style="left:292px">8025301355</span><span style="left:471px">ZainSudan</span></div>
<div class="tr g" style="left:0;top:105px;width:640px"><div class="cb" style="left:23px"></div><span style="left:72px;width:30px;text-align:center">4</span><span style="left:125px">8025300163</span><span style="left:292px">8025300163</span><span style="left:471px">ZainSudan</span></div>
<div class="tr" style="left:0;top:140px;width:640px"><div class="cb" style="left:23px"></div><span style="left:72px;width:30px;text-align:center">5</span><span style="left:125px">8025300093</span><span style="left:292px">8025300093</span><span style="left:471px">ZainSudan</span></div>
<div class="tr g" style="left:0;top:175px;width:640px"><div class="cb" style="left:23px"></div><span style="left:72px;width:30px;text-align:center">6</span><span style="left:125px">8025300273</span><span style="left:292px">8025300273</span><span style="left:471px">ZainSudan</span></div>
<div class="tr" style="left:0;top:210px;width:640px"><div class="cb" style="left:23px"></div><span style="left:72px;width:30px;text-align:center">7</span><span style="left:125px">8025300124</span><span style="left:292px">8025300124</span><span style="left:471px">ZainSudan</span></div>
<div class="tr g" style="left:0;top:245px;width:640px"><div class="cb" style="left:23px"></div><span style="left:72px;width:30px;text-align:center">8</span><span style="left:125px">8025300240</span><span style="left:292px">8025300240</span><span style="left:471px">ZainSudan</span></div>
<div class="tr" style="left:0;top:280px;width:640px"><div class="cb" style="left:23px"></div><span style="left:72px;width:30px;text-align:center">9</span><span style="left:125px">8025300050</span><span style="left:292px">8025300050</span><span style="left:471px">ZainSudan</span></div>
<div class="abs" style="left:640px;top:0;width:14px;height:313px;background:#ecf0fd"></div><div class="abs" style="left:640px;top:0;width:14px;height:56px;background:#95a4f1"></div>
</div>
<div class="panel" style="left:700px"></div>
<div class="abs" style="left:711px;top:78px;font-size:15px;line-height:18px;color:#606266;white-space:nowrap">Number of selected devices: 2 units</div>
<div class="th" style="left:711px;top:111px;width:653px"><span style="left:12px">Cancel</span><span style="left:76px">Index</span><span style="left:130px">Device ID</span><svg class="so" style="left:191px;top:9px" viewBox="0 0 9 14"><path d="M4.500 1L8.800 6H.2zM4.500 13L.2 8h8.600z" fill="#9c9c9c"/></svg><span style="left:294px">Associated asset</span><svg class="so" style="left:400px;top:9px" viewBox="0 0 9 14"><path d="M4.500 1L8.800 6H.2zM4.500 13L.2 8h8.600z" fill="#9c9c9c"/></svg><span style="left:473px">Company</span><svg class="so" style="left:534px;top:9px" viewBox="0 0 9 14"><path d="M4.500 1L8.800 6H.2zM4.500 13L.2 8h8.600z" fill="#9c9c9c"/></svg></div>
<div class="tr" style="left:711px;top:146px;width:653px"><svg style="position:absolute;left:27px;top:12px" width="10" height="10" viewBox="0 0 10 10"><path d="M.5.500l9 9M9.500.500l-9 9" stroke="#4a8af4" stroke-width="1.100" fill="none"/></svg><span style="left:76px;width:31px;text-align:center">1</span><span style="left:130px">8025300204</span><span style="left:294px">8025300204</span><span style="left:473px">ZainSudan</span></div>
<div class="tr g" style="left:711px;top:181px;width:653px"><svg style="position:absolute;left:27px;top:12px" width="10" height="10" viewBox="0 0 10 10"><path d="M.5.500l9 9M9.500.500l-9 9" stroke="#4a8af4" stroke-width="1.100" fill="none"/></svg><span style="left:76px;width:31px;text-align:center">2</span><span style="left:130px">8025300039</span><span style="left:294px">8025300039</span><span style="left:473px">ZainSudan</span></div>
<div class="flb" style="left:25px;top:520px;width:108px">Validity period</div>
<div class="inp" style="left:145px;top:514px;width:270px;height:30px"></div>
<svg class="abs" style="left:156px;top:520px" width="15" height="15" viewBox="0 0 15 15"><rect x=".6" y="2" width="13.800" height="12.400" fill="#dbe8fb" stroke="#7aa7ec" stroke-width="1"/><g fill="#5c8fe6"><rect x="3" y="0" width="2" height="3.500"/><rect x="10" y="0" width="2" height="3.500"/><rect x="3" y="5.500" width="2" height="2"/><rect x="6.500" y="5.500" width="2" height="2"/><rect x="10" y="5.500" width="2" height="2"/><rect x="3" y="8.500" width="2" height="2"/><rect x="6.500" y="8.500" width="2" height="2"/><rect x="10" y="8.500" width="2" height="2"/><rect x="3" y="11.500" width="2" height="2"/><rect x="6.500" y="11.500" width="2" height="2"/><rect x="10" y="11.500" width="2" height="2"/></g></svg>
<div class="abs" style="left:176px;top:521px;font-size:12px;line-height:16px;color:#606266;white-space:nowrap">2025-12-08 18:05:07</div>
<div class="flb" style="left:423px;top:520px">Target language</div>
<div class="inp" style="left:535px;top:514px;width:93px;height:28px;border-radius:3px"></div><div class="abs" style="left:546px;top:522px;width:12px;height:12px;border:1px solid #dcdfe6;border-radius:50%;background:#fff"></div><div class="abs" style="left:568px;top:521px;font-size:12px;line-height:16px;color:#606266">Chinese</div>
<div class="inp" style="left:638px;top:514px;width:88px;height:28px;border-radius:3px;border-color:#5a8cf5"></div><div class="abs" style="left:649px;top:522px;width:12px;height:12px;border-radius:50%;background:#5a8cf5"></div><div class="abs" style="left:653px;top:526px;width:4px;height:4px;border-radius:50%;background:#fff"></div><div class="abs" style="left:671px;top:521px;font-size:12px;line-height:16px;color:#5a8cf5">English</div>
<div class="flb" style="left:860px;top:520px;width:53px">Email</div>
<div class="inp" style="left:925px;top:514px;width:191px;height:30px"></div><div class="abs" style="left:941px;top:521px;font-size:12px;line-height:16px;color:#606266;white-space:nowrap">swhite@jointcontrols.com</div>
<div class="abs" style="left:1126px;top:514px;width:69px;height:28px;border-radius:4px;background:#74a4f9;color:#fff;font-size:14px;line-height:29px;text-align:center">Share</div>
<div class="flb" style="left:25px;top:572px;width:108px">Share link</div>
<div class="inp" style="left:145px;top:566px;width:1050px;height:30px"></div>
<div class="abs" style="left:161px;top:573px;font-size:12px;line-height:16px;color:#606266;white-space:nowrap">https://kcloud.assetscontrols.com:8583/fxydindex.html#/?180&amp;19a46958-f260-4cfe-93c2-eb3040dac54b321892d3-edd9-4525-b17d-043022831400&amp;02</div>
<div class="abs" style="left:1109px;top:566px;width:86px;height:30px;background:#f0f0f0;border:1px solid #dfe1e8;border-radius:0;color:#5a8cf5;font-size:12px;line-height:28px;text-align:center">Copy Link</div>
<svg class="abs" style="left:1229px;top:484px;filter:blur(.4px)" width="142.500" height="142.500" viewBox="0 0 57 57" shape-rendering="crispEdges"><path d="M0 0h7v1h-7zM8 0h5v1h-5zM14 0h2v1h-2zM19 0h1v1h-1zM21 0h1v1h-1zM23 0h4v1h-4zM28 0h1v1h-1zM31 0h1v1h-1zM33 0h3v1h-3zM37 0h2v1h-2zM40 0h2v1h-2zM44 0h1v1h-1zM50 0h7v1h-7zM0 1h1v1h-1zM6 1h1v1h-1zM8 1h1v1h-1zM11 1h1v1h-1zM13 1h1v1h-1zM18 1h2v1h-2zM21 1h5v1h-5zM27 1h3v1h-3zM31 1h2v1h-2zM37 1h3v1h-3zM42 1h4v1h-4zM48 1h1v1h-1zM50 1h1v1h-1zM56 1h1v1h-1zM0 2h1v1h-1zM2 2h3v1h-3zM6 2h1v1h-1zM8 2h1v1h-1zM10 2h11v1h-11zM23 2h5v1h-5zM30 2h1v1h-1zM32 2h4v1h-4zM37 2h2v1h-2zM41 2h1v1h-1zM43 2h1v1h-1zM48 2h1v1h-1zM50 2h1v1h-1zM52 2h3v1h-3zM56 2h1v1h-1zM0 3h1v1h-1zM2 3h3v1h-3zM6 3h1v1h-1zM8 3h4v1h-4zM14 3h1v1h-1zM18 3h5v1h-5zM26 3h1v1h-1zM29 3h1v1h-1zM34 3h2v1h-2zM37 3h1v1h-1zM40 3h2v1h-2zM44 3h3v1h-3zM50 3h1v1h-1zM52 3h3v1h-3zM56 3h1v1h-1zM0 4h1v1h-1zM2 4h3v1h-3zM6 4h1v1h-1zM8 4h3v1h-3zM12 4h3v1h-3zM16 4h2v1h-2zM20 4h1v1h-1zM25 4h7v1h-7zM34 4h1v1h-1zM38 4h1v1h-1zM40 4h2v1h-2zM47 4h1v1h-1zM50 4h1v1h-1zM52 4h3v1h-3zM56 4h1v1h-1zM0 5h1v1h-1zM6 5h1v1h-1zM8 5h4v1h-4zM15 5h1v1h-1zM18 5h1v1h-1zM21 5h1v1h-1zM23 5h1v1h-1zM26 5h1v1h-1zM30 5h3v1h-3zM34 5h1v1h-1zM36 5h3v1h-3zM41 5h1v1h-1zM45 5h3v1h-3zM50 5h1v1h-1zM56 5h1v1h-1zM0 6h7v1h-7zM8 6h1v1h-1zM10 6h1v1h-1zM12 6h1v1h-1zM14 6h1v1h-1zM16 6h1v1h-1zM18 6h1v1h-1zM20 6h1v1h-1zM22 6h1v1h-1zM24 6h1v1h-1zM26 6h1v1h-1zM28 6h1v1h-1zM30 6h1v1h-1zM32 6h1v1h-1zM34 6h1v1h-1zM36 6h1v1h-1zM38 6h1v1h-1zM40 6h1v1h-1zM42 6h1v1h-1zM44 6h1v1h-1zM46 6h1v1h-1zM48 6h1v1h-1zM50 6h7v1h-7zM9 7h7v1h-7zM19 7h1v1h-1zM21 7h6v1h-6zM30 7h7v1h-7zM43 7h2v1h-2zM46 7h1v1h-1zM6 8h1v1h-1zM8 8h5v1h-5zM19 8h1v1h-1zM25 8h7v1h-7zM35 8h2v1h-2zM41 8h3v1h-3zM45 8h1v1h-1zM47 8h3v1h-3zM53 8h1v1h-1zM55 8h2v1h-2zM0 9h1v1h-1zM2 9h1v1h-1zM5 9h1v1h-1zM9 9h3v1h-3zM13 9h1v1h-1zM15 9h1v1h-1zM18 9h1v1h-1zM23 9h1v1h-1zM26 9h2v1h-2zM29 9h5v1h-5zM35 9h1v1h-1zM38 9h1v1h-1zM42 9h3v1h-3zM47 9h5v1h-5zM53 9h1v1h-1zM55 9h2v1h-2zM1 10h2v1h-2zM6 10h1v1h-1zM11 10h1v1h-1zM13 10h1v1h-1zM16 10h2v1h-2zM19 10h4v1h-4zM25 10h1v1h-1zM27 10h1v1h-1zM29 10h4v1h-4zM35 10h1v1h-1zM38 10h8v1h-8zM49 10h2v1h-2zM52 10h4v1h-4zM0 11h1v1h-1zM4 11h2v1h-2zM7 11h2v1h-2zM12 11h2v1h-2zM16 11h1v1h-1zM18 11h2v1h-2zM24 11h3v1h-3zM33 11h1v1h-1zM35 11h1v1h-1zM37 11h1v1h-1zM40 11h3v1h-3zM45 11h2v1h-2zM49 11h2v1h-2zM52 11h3v1h-3zM1 12h3v1h-3zM6 12h2v1h-2zM10 12h2v1h-2zM14 12h4v1h-4zM19 12h1v1h-1zM23 12h1v1h-1zM25 12h1v1h-1zM27 12h2v1h-2zM30 12h1v1h-1zM33 12h3v1h-3zM38 12h3v1h-3zM42 12h4v1h-4zM51 12h2v1h-2zM55 12h1v1h-1zM0 13h6v1h-6zM8 13h1v1h-1zM10 13h2v1h-2zM14 13h4v1h-4zM19 13h2v1h-2zM22 13h2v1h-2zM26 13h3v1h-3zM30 13h1v1h-1zM33 13h2v1h-2zM37 13h1v1h-1zM39 13h3v1h-3zM46 13h3v1h-3zM51 13h3v1h-3zM56 13h1v1h-1zM5 14h3v1h-3zM9 14h2v1h-2zM12 14h3v1h-3zM16 14h1v1h-1zM20 14h3v1h-3zM25 14h3v1h-3zM33 14h1v1h-1zM35 14h1v1h-1zM37 14h1v1h-1zM39 14h4v1h-4zM45 14h2v1h-2zM49 14h1v1h-1zM53 14h2v1h-2zM1 15h4v1h-4zM8 15h1v1h-1zM10 15h2v1h-2zM14 15h1v1h-1zM17 15h5v1h-5zM24 15h3v1h-3zM28 15h3v1h-3zM33 15h3v1h-3zM38 15h2v1h-2zM41 15h3v1h-3zM45 15h1v1h-1zM47 15h2v1h-2zM51 15h2v1h-2zM54 15h2v1h-2zM0 16h1v1h-1zM2 16h1v1h-1zM4 16h3v1h-3zM10 16h1v1h-1zM12 16h1v1h-1zM14 16h2v1h-2zM18 16h1v1h-1zM22 16h2v1h-2zM27 16h1v1h-1zM29 16h1v1h-1zM33 16h1v1h-1zM35 16h2v1h-2zM39 16h3v1h-3zM43 16h3v1h-3zM48 16h1v1h-1zM51 16h1v1h-1zM53 16h1v1h-1zM0 17h2v1h-2zM3 17h1v1h-1zM5 17h1v1h-1zM7 17h1v1h-1zM10 17h1v1h-1zM13 17h8v1h-8zM22 17h1v1h-1zM24 17h1v1h-1zM28 17h1v1h-1zM30 17h1v1h-1zM32 17h1v1h-1zM37 17h1v1h-1zM42 17h1v1h-1zM45 17h2v1h-2zM48 17h1v1h-1zM50 17h1v1h-1zM52 17h1v1h-1zM55 17h2v1h-2zM1 18h4v1h-4zM6 18h1v1h-1zM8 18h1v1h-1zM10 18h1v1h-1zM13 18h1v1h-1zM18 18h1v1h-1zM21 18h1v1h-1zM23 18h1v1h-1zM26 18h1v1h-1zM28 18h2v1h-2zM31 18h1v1h-1zM33 18h1v1h-1zM38 18h4v1h-4zM43 18h1v1h-1zM46 18h2v1h-2zM49 18h6v1h-6zM0 19h1v1h-1zM2 19h2v1h-2zM5 19h1v1h-1zM7 19h1v1h-1zM11 19h3v1h-3zM16 19h1v1h-1zM18 19h1v1h-1zM21 19h1v1h-1zM23 19h1v1h-1zM25 19h3v1h-3zM29 19h1v1h-1zM32 19h2v1h-2zM38 19h4v1h-4zM45 19h1v1h-1zM48 19h1v1h-1zM50 19h6v1h-6zM3 20h1v1h-1zM5 20h2v1h-2zM8 20h1v1h-1zM11 20h1v1h-1zM13 20h3v1h-3zM19 20h1v1h-1zM21 20h2v1h-2zM28 20h1v1h-1zM32 20h1v1h-1zM35 20h2v1h-2zM38 20h1v1h-1zM40 20h3v1h-3zM44 20h4v1h-4zM52 20h1v1h-1zM54 20h1v1h-1zM1 21h1v1h-1zM5 21h1v1h-1zM7 21h2v1h-2zM14 21h3v1h-3zM18 21h6v1h-6zM25 21h2v1h-2zM31 21h3v1h-3zM35 21h1v1h-1zM38 21h1v1h-1zM40 21h1v1h-1zM42 21h3v1h-3zM47 21h1v1h-1zM51 21h1v1h-1zM53 21h1v1h-1zM55 21h1v1h-1zM0 22h2v1h-2zM4 22h1v1h-1zM6 22h1v1h-1zM11 22h3v1h-3zM15 22h1v1h-1zM17 22h3v1h-3zM22 22h1v1h-1zM24 22h2v1h-2zM30 22h3v1h-3zM36 22h2v1h-2zM40 22h2v1h-2zM43 22h3v1h-3zM48 22h4v1h-4zM53 22h3v1h-3zM1 23h1v1h-1zM3 23h2v1h-2zM8 23h2v1h-2zM11 23h5v1h-5zM20 23h2v1h-2zM23 23h1v1h-1zM26 23h1v1h-1zM29 23h2v1h-2zM38 23h2v1h-2zM41 23h2v1h-2zM46 23h3v1h-3zM50 23h1v1h-1zM53 23h1v1h-1zM56 23h1v1h-1zM2 24h1v1h-1zM4 24h1v1h-1zM6 24h1v1h-1zM8 24h1v1h-1zM16 24h1v1h-1zM18 24h1v1h-1zM20 24h1v1h-1zM22 24h1v1h-1zM33 24h2v1h-2zM38 24h1v1h-1zM40 24h3v1h-3zM46 24h1v1h-1zM48 24h1v1h-1zM50 24h1v1h-1zM54 24h2v1h-2zM0 25h1v1h-1zM2 25h1v1h-1zM4 25h2v1h-2zM7 25h3v1h-3zM11 25h5v1h-5zM18 25h1v1h-1zM21 25h1v1h-1zM33 25h3v1h-3zM37 25h2v1h-2zM41 25h1v1h-1zM49 25h1v1h-1zM53 25h1v1h-1zM56 25h1v1h-1zM0 26h2v1h-2zM3 26h6v1h-6zM10 26h1v1h-1zM12 26h1v1h-1zM16 26h2v1h-2zM19 26h1v1h-1zM22 26h1v1h-1zM34 26h1v1h-1zM36 26h2v1h-2zM40 26h3v1h-3zM45 26h1v1h-1zM47 26h6v1h-6zM54 26h3v1h-3zM3 27h2v1h-2zM8 27h3v1h-3zM22 27h1v1h-1zM36 27h5v1h-5zM43 27h1v1h-1zM45 27h2v1h-2zM48 27h1v1h-1zM52 27h1v1h-1zM56 27h1v1h-1zM0 28h2v1h-2zM3 28h2v1h-2zM6 28h1v1h-1zM8 28h1v1h-1zM10 28h1v1h-1zM12 28h2v1h-2zM15 28h1v1h-1zM17 28h2v1h-2zM23 28h1v1h-1zM35 28h2v1h-2zM38 28h1v1h-1zM41 28h2v1h-2zM44 28h1v1h-1zM46 28h1v1h-1zM48 28h1v1h-1zM50 28h1v1h-1zM52 28h1v1h-1zM0 29h2v1h-2zM4 29h1v1h-1zM8 29h1v1h-1zM10 29h2v1h-2zM13 29h1v1h-1zM18 29h4v1h-4zM35 29h2v1h-2zM39 29h1v1h-1zM42 29h1v1h-1zM45 29h4v1h-4zM52 29h1v1h-1zM54 29h1v1h-1zM2 30h1v1h-1zM4 30h5v1h-5zM10 30h1v1h-1zM12 30h2v1h-2zM15 30h2v1h-2zM19 30h1v1h-1zM21 30h1v1h-1zM23 30h1v1h-1zM36 30h6v1h-6zM44 30h1v1h-1zM47 30h6v1h-6zM0 31h3v1h-3zM5 31h1v1h-1zM7 31h2v1h-2zM12 31h1v1h-1zM17 31h2v1h-2zM22 31h1v1h-1zM34 31h1v1h-1zM36 31h2v1h-2zM39 31h1v1h-1zM43 31h3v1h-3zM49 31h2v1h-2zM52 31h1v1h-1zM54 31h3v1h-3zM2 32h1v1h-1zM4 32h4v1h-4zM9 32h2v1h-2zM12 32h1v1h-1zM14 32h1v1h-1zM16 32h1v1h-1zM19 32h5v1h-5zM33 32h1v1h-1zM35 32h1v1h-1zM37 32h3v1h-3zM42 32h2v1h-2zM45 32h1v1h-1zM47 32h2v1h-2zM51 32h3v1h-3zM56 32h1v1h-1zM0 33h1v1h-1zM5 33h1v1h-1zM8 33h1v1h-1zM10 33h1v1h-1zM12 33h1v1h-1zM16 33h1v1h-1zM18 33h1v1h-1zM20 33h2v1h-2zM23 33h3v1h-3zM27 33h1v1h-1zM29 33h1v1h-1zM31 33h1v1h-1zM35 33h1v1h-1zM37 33h1v1h-1zM39 33h1v1h-1zM46 33h1v1h-1zM48 33h4v1h-4zM53 33h2v1h-2zM56 33h1v1h-1zM0 34h1v1h-1zM5 34h2v1h-2zM8 34h2v1h-2zM12 34h4v1h-4zM18 34h1v1h-1zM21 34h1v1h-1zM24 34h2v1h-2zM28 34h1v1h-1zM31 34h4v1h-4zM40 34h1v1h-1zM44 34h2v1h-2zM47 34h1v1h-1zM49 34h2v1h-2zM52 34h2v1h-2zM4 35h1v1h-1zM8 35h1v1h-1zM12 35h1v1h-1zM14 35h1v1h-1zM16 35h2v1h-2zM19 35h1v1h-1zM23 35h2v1h-2zM26 35h8v1h-8zM39 35h1v1h-1zM41 35h1v1h-1zM44 35h4v1h-4zM49 35h1v1h-1zM51 35h2v1h-2zM54 35h1v1h-1zM0 36h1v1h-1zM2 36h1v1h-1zM4 36h7v1h-7zM12 36h2v1h-2zM16 36h3v1h-3zM27 36h1v1h-1zM31 36h1v1h-1zM33 36h1v1h-1zM39 36h1v1h-1zM43 36h3v1h-3zM47 36h2v1h-2zM50 36h2v1h-2zM55 36h2v1h-2zM0 37h2v1h-2zM4 37h1v1h-1zM10 37h2v1h-2zM13 37h2v1h-2zM24 37h2v1h-2zM27 37h1v1h-1zM31 37h3v1h-3zM39 37h1v1h-1zM42 37h1v1h-1zM45 37h2v1h-2zM50 37h1v1h-1zM56 37h1v1h-1zM0 38h2v1h-2zM4 38h3v1h-3zM8 38h1v1h-1zM11 38h2v1h-2zM14 38h1v1h-1zM16 38h2v1h-2zM21 38h1v1h-1zM24 38h1v1h-1zM29 38h3v1h-3zM33 38h3v1h-3zM40 38h2v1h-2zM43 38h1v1h-1zM45 38h4v1h-4zM51 38h4v1h-4zM1 39h1v1h-1zM3 39h2v1h-2zM7 39h1v1h-1zM10 39h1v1h-1zM15 39h2v1h-2zM18 39h2v1h-2zM23 39h4v1h-4zM28 39h1v1h-1zM30 39h1v1h-1zM32 39h4v1h-4zM37 39h6v1h-6zM44 39h2v1h-2zM47 39h2v1h-2zM50 39h2v1h-2zM54 39h2v1h-2zM0 40h1v1h-1zM2 40h1v1h-1zM5 40h3v1h-3zM9 40h1v1h-1zM12 40h2v1h-2zM15 40h1v1h-1zM17 40h1v1h-1zM20 40h1v1h-1zM22 40h1v1h-1zM25 40h4v1h-4zM30 40h1v1h-1zM32 40h1v1h-1zM34 40h1v1h-1zM36 40h5v1h-5zM42 40h2v1h-2zM48 40h3v1h-3zM53 40h2v1h-2zM0 41h1v1h-1zM2 41h1v1h-1zM4 41h2v1h-2zM9 41h8v1h-8zM18 41h1v1h-1zM22 41h2v1h-2zM25 41h2v1h-2zM29 41h2v1h-2zM33 41h3v1h-3zM37 41h1v1h-1zM40 41h1v1h-1zM42 41h1v1h-1zM45 41h2v1h-2zM48 41h1v1h-1zM54 41h2v1h-2zM0 42h1v1h-1zM3 42h1v1h-1zM5 42h2v1h-2zM8 42h1v1h-1zM13 42h7v1h-7zM22 42h2v1h-2zM25 42h1v1h-1zM27 42h2v1h-2zM30 42h1v1h-1zM32 42h1v1h-1zM36 42h1v1h-1zM39 42h1v1h-1zM42 42h7v1h-7zM50 42h7v1h-7zM0 43h1v1h-1zM3 43h1v1h-1zM7 43h1v1h-1zM9 43h2v1h-2zM12 43h1v1h-1zM18 43h4v1h-4zM24 43h2v1h-2zM29 43h1v1h-1zM33 43h2v1h-2zM36 43h2v1h-2zM39 43h1v1h-1zM41 43h2v1h-2zM51 43h2v1h-2zM54 43h1v1h-1zM56 43h1v1h-1zM0 44h1v1h-1zM2 44h6v1h-6zM11 44h2v1h-2zM15 44h3v1h-3zM21 44h3v1h-3zM25 44h5v1h-5zM37 44h1v1h-1zM40 44h1v1h-1zM45 44h2v1h-2zM48 44h2v1h-2zM51 44h2v1h-2zM54 44h1v1h-1zM56 44h1v1h-1zM2 45h3v1h-3zM7 45h1v1h-1zM9 45h2v1h-2zM12 45h1v1h-1zM15 45h1v1h-1zM17 45h1v1h-1zM20 45h4v1h-4zM28 45h1v1h-1zM31 45h1v1h-1zM33 45h2v1h-2zM38 45h1v1h-1zM40 45h4v1h-4zM45 45h2v1h-2zM48 45h1v1h-1zM55 45h1v1h-1zM0 46h1v1h-1zM4 46h3v1h-3zM9 46h1v1h-1zM11 46h1v1h-1zM14 46h1v1h-1zM17 46h3v1h-3zM22 46h3v1h-3zM26 46h1v1h-1zM28 46h1v1h-1zM30 46h2v1h-2zM37 46h3v1h-3zM43 46h2v1h-2zM47 46h3v1h-3zM51 46h1v1h-1zM54 46h3v1h-3zM2 47h4v1h-4zM7 47h3v1h-3zM11 47h3v1h-3zM15 47h2v1h-2zM18 47h2v1h-2zM21 47h1v1h-1zM26 47h1v1h-1zM33 47h2v1h-2zM39 47h1v1h-1zM44 47h1v1h-1zM46 47h4v1h-4zM52 47h5v1h-5zM0 48h1v1h-1zM2 48h2v1h-2zM5 48h5v1h-5zM13 48h1v1h-1zM16 48h2v1h-2zM20 48h1v1h-1zM22 48h1v1h-1zM24 48h1v1h-1zM26 48h6v1h-6zM33 48h3v1h-3zM39 48h1v1h-1zM43 48h1v1h-1zM46 48h9v1h-9zM10 49h3v1h-3zM16 49h1v1h-1zM19 49h4v1h-4zM24 49h1v1h-1zM26 49h1v1h-1zM30 49h1v1h-1zM32 49h1v1h-1zM34 49h1v1h-1zM38 49h1v1h-1zM41 49h2v1h-2zM45 49h4v1h-4zM52 49h1v1h-1zM54 49h3v1h-3zM0 50h7v1h-7zM10 50h2v1h-2zM13 50h1v1h-1zM17 50h1v1h-1zM19 50h2v1h-2zM22 50h1v1h-1zM24 50h1v1h-1zM26 50h1v1h-1zM28 50h1v1h-1zM30 50h1v1h-1zM34 50h6v1h-6zM42 50h1v1h-1zM44 50h1v1h-1zM46 50h1v1h-1zM48 50h1v1h-1zM50 50h1v1h-1zM52 50h2v1h-2zM56 50h1v1h-1zM0 51h1v1h-1zM6 51h1v1h-1zM10 51h1v1h-1zM13 51h3v1h-3zM17 51h1v1h-1zM19 51h1v1h-1zM21 51h2v1h-2zM24 51h3v1h-3zM30 51h2v1h-2zM34 51h1v1h-1zM36 51h4v1h-4zM41 51h1v1h-1zM43 51h1v1h-1zM45 51h4v1h-4zM52 51h2v1h-2zM56 51h1v1h-1zM0 52h1v1h-1zM2 52h3v1h-3zM6 52h1v1h-1zM8 52h1v1h-1zM10 52h1v1h-1zM12 52h2v1h-2zM22 52h3v1h-3zM26 52h6v1h-6zM34 52h1v1h-1zM36 52h4v1h-4zM43 52h1v1h-1zM45 52h1v1h-1zM48 52h5v1h-5zM56 52h1v1h-1zM0 53h1v1h-1zM2 53h3v1h-3zM6 53h1v1h-1zM8 53h1v1h-1zM11 53h1v1h-1zM13 53h1v1h-1zM15 53h1v1h-1zM18 53h3v1h-3zM26 53h2v1h-2zM29 53h1v1h-1zM34 53h2v1h-2zM38 53h5v1h-5zM45 53h3v1h-3zM50 53h2v1h-2zM54 53h1v1h-1zM56 53h1v1h-1zM0 54h1v1h-1zM2 54h3v1h-3zM6 54h1v1h-1zM8 54h2v1h-2zM11 54h3v1h-3zM15 54h1v1h-1zM18 54h2v1h-2zM22 54h4v1h-4zM27 54h2v1h-2zM31 54h2v1h-2zM35 54h1v1h-1zM38 54h1v1h-1zM40 54h2v1h-2zM43 54h1v1h-1zM48 54h1v1h-1zM50 54h2v1h-2zM53 54h2v1h-2zM56 54h1v1h-1zM0 55h1v1h-1zM6 55h1v1h-1zM11 55h3v1h-3zM15 55h2v1h-2zM19 55h1v1h-1zM23 55h1v1h-1zM25 55h1v1h-1zM30 55h2v1h-2zM33 55h1v1h-1zM35 55h4v1h-4zM42 55h3v1h-3zM48 55h3v1h-3zM52 55h2v1h-2zM56 55h1v1h-1zM0 56h7v1h-7zM9 56h2v1h-2zM12 56h1v1h-1zM16 56h1v1h-1zM18 56h1v1h-1zM20 56h2v1h-2zM23 56h1v1h-1zM25 56h1v1h-1zM27 56h1v1h-1zM34 56h2v1h-2zM37 56h1v1h-1zM39 56h3v1h-3zM44 56h1v1h-1zM46 56h1v1h-1zM49 56h2v1h-2zM52 56h1v1h-1zM54 56h2v1h-2z" fill="#000"/></svg>
<div class="abs" style="left:1289px;top:544px;width:22px;height:22px;background:#fff;border:1px solid #7aa7f5;border-radius:3px"></div><svg class="abs" style="left:1292px;top:547px" width="16" height="16" viewBox="0 0 16 16"><g fill="#5a8cf5"><circle cx="11.500" cy="3.500" r="2.300"/><circle cx="11.500" cy="12.500" r="2.300"/><circle cx="4" cy="8" r="2.600"/></g><path d="M11.500 3.500L4 8l7.500 4.500" fill="none" stroke="#5a8cf5" stroke-width="1.300"/></svg>
</div>

</div>
</body>
</html>
